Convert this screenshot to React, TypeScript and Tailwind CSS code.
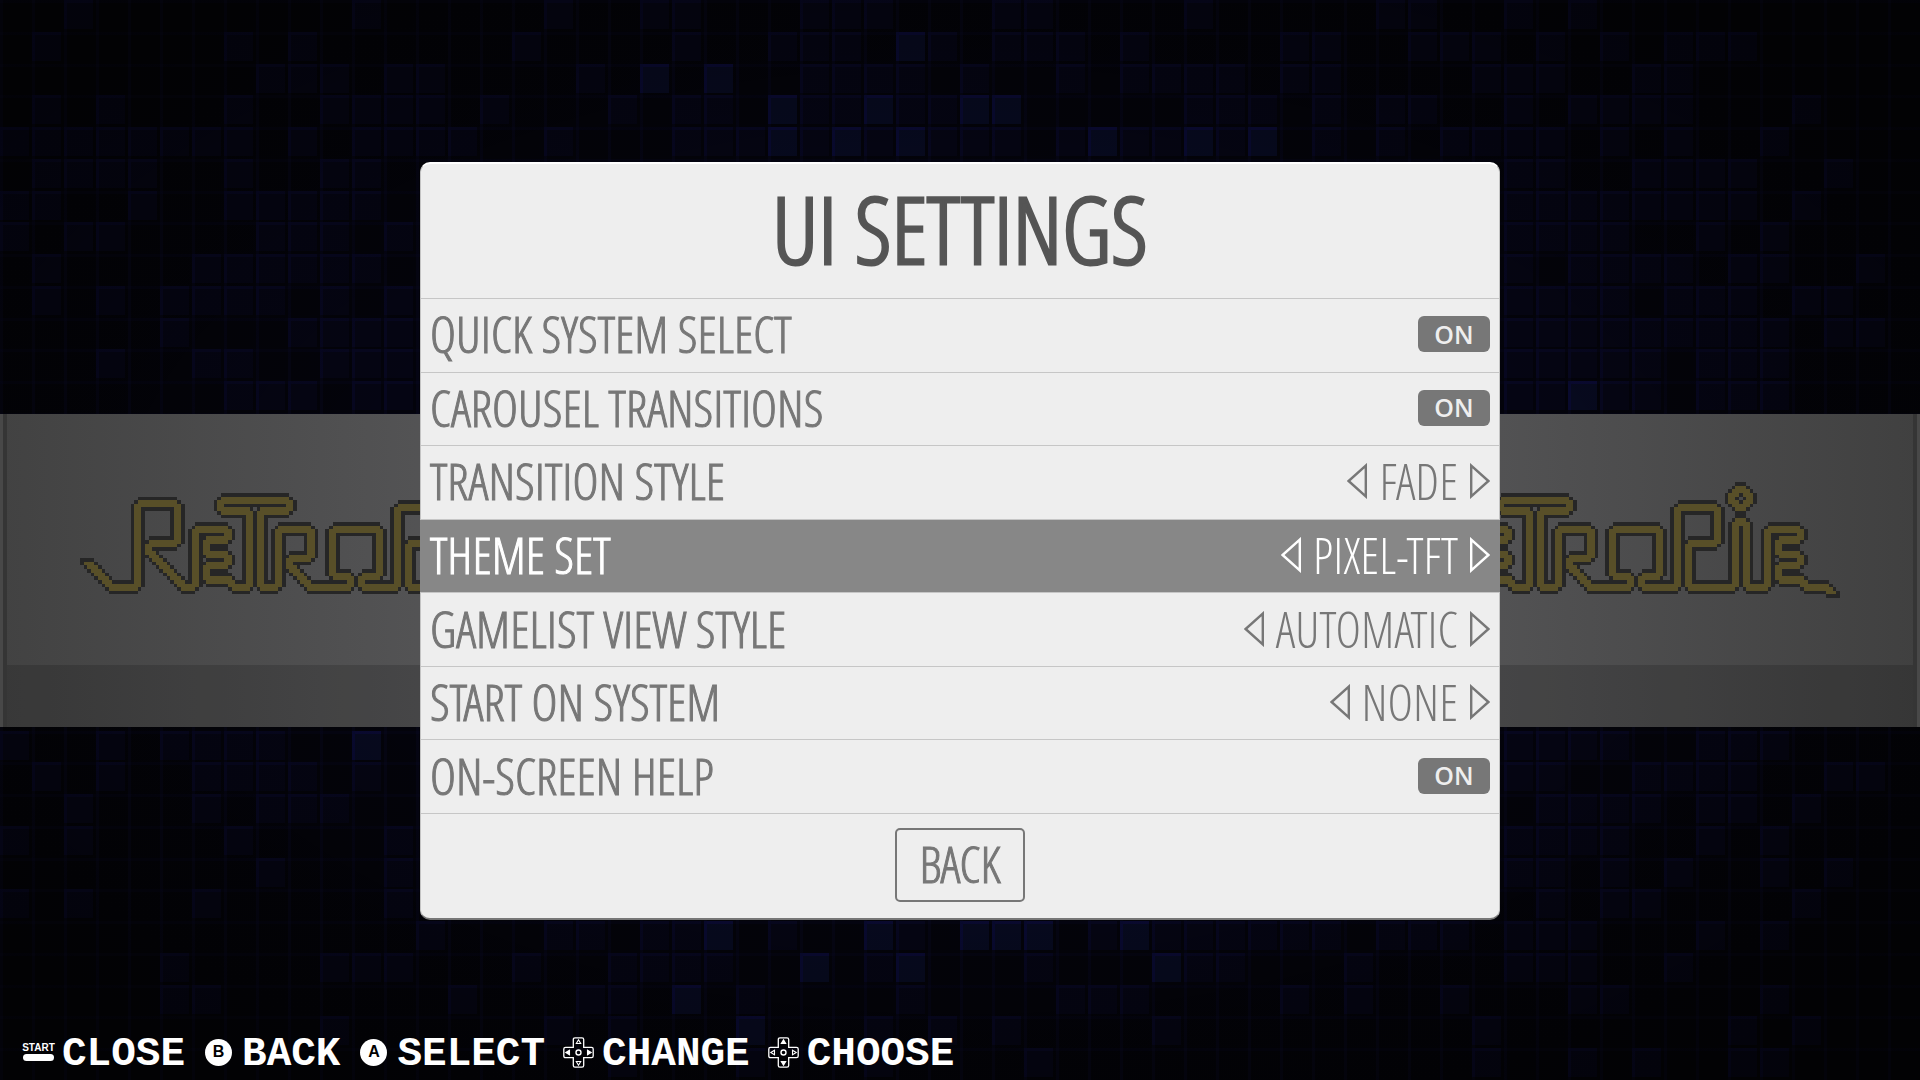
import { useState } from "react";

/* ---------- Backdrop: dark mosaic of 60 x 34 tiles ---------- */

const COLS = 60;
const ROWS = 34;
const TILE_W = 32;
const TILE_H = 1080 / ROWS;

// Lit tiles, one list of columns per row.
const LIT: number[][] = [
  [2, 11, 17, 20, 21, 25, 26, 27, 31, 32, 37, 43, 44, 47, 49],
  [1, 7, 9, 16, 21, 24, 25, 26, 28, 29, 31, 32, 33, 35, 40, 41, 44, 45, 46, 48, 50, 52, 53, 54],
  [8, 9, 10, 12, 13, 18, 20, 22, 25, 26, 27, 28, 30, 33, 35, 36, 37, 38, 40, 41, 46, 47, 48, 51, 52],
  [1, 3, 7, 10, 11, 12, 13, 15, 19, 21, 22, 24, 25, 26, 27, 28, 29, 30, 31, 37, 38, 39, 41, 43, 44, 47, 49, 50, 51, 52, 56],
  [0, 1, 2, 3, 4, 5, 6, 7, 9, 11, 12, 13, 14, 17, 21, 22, 23, 24, 25, 26, 27, 28, 29, 30, 31, 33, 34, 35, 36, 37, 38, 39, 41, 43, 45, 46, 47, 48, 50, 52, 55],
  [1, 2, 3, 4, 7, 10, 11, 47, 48, 51, 52, 53, 54, 57],
  [0, 1, 4, 7, 8, 9, 10, 11, 47, 48, 49, 50, 51, 52, 53, 54, 56],
  [0, 2, 3, 8, 9, 10, 12, 47, 48, 49, 50, 53, 55],
  [1, 6, 7, 8, 9, 10, 11, 47, 49, 50, 51, 52, 54, 55, 58],
  [1, 3, 5, 6, 7, 8, 10, 12, 47, 48, 49, 50, 52, 53, 54, 56, 57],
  [5, 9, 10, 11, 12, 47, 48, 49, 50, 51, 52, 53, 54, 55, 57, 58],
  [3, 6, 7, 10, 11, 12, 47, 48, 49, 50, 51, 53, 54, 55],
  [7, 8, 9, 11, 12, 47, 48, 49, 50, 51, 53, 54, 55],
  [], [], [], [], [], [], [], [], [], [],
  [0, 3, 5, 6, 7, 8, 11, 47, 48, 49, 50, 53, 54, 55],
  [1, 3, 6, 7, 8, 9, 11, 47, 48, 51, 52, 53, 54, 57, 58],
  [2, 6, 8, 9, 10, 48, 49, 50, 51, 53, 54, 56],
  [0, 2, 7, 12, 47, 48, 49, 50, 53, 55],
  [8, 12, 47, 48, 50, 52, 55, 57],
  [0, 2, 6, 12, 48, 50, 51, 56],
  [13, 17, 18, 20, 21, 22, 24, 27, 28, 30, 31, 32, 34, 35, 36, 37, 38, 39, 40, 41, 43, 44, 45, 47, 48, 49, 53, 55],
  [5, 10, 11, 12, 16, 19, 20, 21, 22, 25, 27, 28, 32, 36, 37, 38, 42, 47, 48, 49, 52],
  [5, 6, 14, 18, 19, 21, 23, 28, 33, 34, 35, 40, 42, 45, 49, 50, 55],
  [10, 17, 19, 23, 27, 29, 31, 36, 46, 54, 56],
  [19, 23, 27, 32, 46, 49, 51, 54, 55],
];

// Tiles that glow stronger than the other lit ones.
const BRIGHT = new Set([
  "28,1", "20,2", "22,2", "24,3", "27,3", "30,3", "31,3", "24,4", "26,4", "28,4", "34,4", "37,4", "39,4",
  "49,12", "11,23", "22,29", "27,29", "30,29", "31,29", "32,29", "35,29",
  "25,30", "28,30", "36,30", "21,31", "23,32",
]);

function Backdrop() {
  const lit = LIT.flatMap((cols, row) => cols.map((col) => ({ col, row })));
  return (
    <svg className="h-full w-full" viewBox="0 0 1920 1080" preserveAspectRatio="none" aria-hidden="true">
      <defs>
        <radialGradient id="shade" cx="50%" cy="50%" r="62%">
          <stop offset="0" stopColor="#04040f" />
          <stop offset="0.5" stopColor="#03030b" />
          <stop offset="1" stopColor="#030306" />
        </radialGradient>
        <radialGradient id="vignette" cx="50%" cy="50%" r="62%">
          <stop offset="0.5" stopColor="#000" stopOpacity="0" />
          <stop offset="1" stopColor="#000" stopOpacity="0.4" />
        </radialGradient>
      </defs>
      <rect width="1920" height="1080" fill="url(#shade)" />
      <g shapeRendering="crispEdges">
        {lit.map(({ col, row }) => {
          const strong = BRIGHT.has(`${col},${row}`);
          const x = col * TILE_W;
          const y = row * TILE_H;
          return (
            <g key={`${col},${row}`}>
              <rect x={x} y={y} width={29} height={29} fill={strong ? "#0a0b33" : "#07071c"} />
              <rect x={x + 3} y={y + 3} width={26} height={26} fill={strong ? "#070a1f" : "#050513"} />
            </g>
          );
        })}
        {Array.from({ length: COLS }, (_, i) => (
          <rect key={`c${i}`} x={i * TILE_W} y={0} width={3} height={1080} fill="#0a0a2c" opacity={0.3} />
        ))}
        {Array.from({ length: ROWS }, (_, i) => (
          <rect key={`r${i}`} x={0} y={i * TILE_H} width={1920} height={3} fill="#0a0a2c" opacity={0.2} />
        ))}
      </g>
      <rect width="1920" height="1080" fill="url(#vignette)" />
    </svg>
  );
}

/* ---------- RetroPie logo, drawn on a 133 x 32 pixel grid ---------- */

const LOGO_W = 133;
const LOGO_H = 32;

// Centre line of the tube, walked with a 2 x 2 brush.
const TUBE: [number, number][] = [
  [2, 22], [8, 28], [15, 28], [15, 5], [26, 5], [26, 16], [18, 16], [18, 18], [28, 28], [31, 28],
  [31, 12], [40, 12], [40, 15], [34, 15], [34, 19], [40, 19], [40, 22], [34, 22], [34, 26], [40, 26], [42, 28],
  [46, 28], [46, 7], [38, 7], [38, 4], [57, 4], [57, 7], [49, 7], [49, 28],
  [54, 28], [54, 12], [63, 12], [63, 20], [57, 20], [57, 22], [63, 28],
  [74, 28], [74, 25], [69, 25], [69, 12], [82, 12], [82, 25], [77, 25], [77, 28],
  [87, 28], [87, 6], [98, 6], [98, 16], [90, 16], [90, 28],
  [103, 28], [103, 10], [106, 10], [106, 28],
  [112, 28], [112, 12], [121, 12], [121, 15], [115, 15], [115, 19], [121, 19], [121, 22], [115, 22], [115, 26],
  [121, 26], [123, 28], [128, 28], [129, 29],
];

// The dot over the "i": row, first column, last column.
const DOT: [number, number, number][] = [
  [1, 104, 106], [2, 103, 107], [3, 102, 108], [4, 102, 108], [5, 102, 108], [6, 103, 107], [7, 104, 106],
];

function buildLogo() {
  const gold = new Set<number>();
  const at = (x: number, y: number) => y * LOGO_W + x;
  const stamp = (x: number, y: number) => {
    gold.add(at(x, y));
    gold.add(at(x + 1, y));
    gold.add(at(x, y + 1));
    gold.add(at(x + 1, y + 1));
  };
  for (let i = 1; i < TUBE.length; i++) {
    let [x, y] = TUBE[i - 1];
    const [tx, ty] = TUBE[i];
    stamp(x, y);
    while (x !== tx || y !== ty) {
      x += Math.sign(tx - x);
      y += Math.sign(ty - y);
      stamp(x, y);
    }
  }
  // Round every right-angled bend by dropping its outer cell.
  for (let i = 1; i < TUBE.length - 1; i++) {
    const [px, py] = TUBE[i - 1];
    const [x, y] = TUBE[i];
    const [nx, ny] = TUBE[i + 1];
    const a = [Math.sign(x - px), Math.sign(y - py)];
    const b = [Math.sign(nx - x), Math.sign(ny - y)];
    if (a[0] * b[0] + a[1] * b[1] !== 0) continue;
    if ((a[0] && a[1]) || (b[0] && b[1])) continue;
    const sx = a[0] || -b[0];
    const sy = a[1] || -b[1];
    gold.delete(at(x + (sx > 0 ? 1 : 0), y + (sy > 0 ? 1 : 0)));
  }
  gold.add(at(1, 22));
  gold.add(at(131, 30));
  for (const [y, x0, x1] of DOT) for (let x = x0; x <= x1; x++) gold.add(at(x, y));
  [at(105, 3), at(104, 4), at(105, 4), at(106, 4), at(105, 5)].forEach((c) => gold.delete(c));

  const dark = new Set<number>([at(0, 21), at(132, 31), at(104, 8), at(105, 8), at(106, 8)]);
  gold.forEach((c) => {
    [c - 1, c + 1, c - LOGO_W, c + LOGO_W].forEach((n) => {
      if (!gold.has(n)) dark.add(n);
    });
  });
  const toPath = (cells: Set<number>) =>
    [...cells].map((c) => `M${c % LOGO_W} ${Math.floor(c / LOGO_W)}h1v1h-1z`).join("");
  return { gold: toPath(gold), dark: toPath(dark) };
}

const LOGO = buildLogo();

function RetroPieLogo() {
  return (
    <svg
      className="h-[116px] w-3/4"
      viewBox={`0 0 ${LOGO_W} ${LOGO_H}`}
      preserveAspectRatio="none"
      shapeRendering="crispEdges"
      role="img"
      aria-label="RetroPie"
    >
      <path d={LOGO.dark} fill="#262626" />
      <path d={LOGO.gold} fill="#584f28" />
    </svg>
  );
}

function SystemBand() {
  return (
    <div className="mt-[414px] flex h-[313px] flex-col bg-linear-to-r from-[#424242] via-[#6a6a6d] to-[#404040]">
      <div className="flex flex-1 border-x-3 border-[#484848]">
        <div className="flex flex-1 flex-col border-x-4 border-[#353535]">
          <div className="-mx-[7px] flex h-[251px] items-start pt-[68px]">
            {[0, 1, 2].map((i) => (
              <div key={i} className="flex flex-1 justify-center">
                <RetroPieLogo />
              </div>
            ))}
          </div>
          <div className="flex-1 bg-black/15" />
        </div>
      </div>
    </div>
  );
}

/* ---------- Settings panel ---------- */

function Arrow({ flip = false }: { flip?: boolean }) {
  return (
    <svg className="h-9 w-5" viewBox="0 0 20 36" fill="none" stroke="currentColor" strokeWidth="2.4" aria-hidden="true">
      {flip ? <path d="M1.2 2.6v30.8L18.4 18z" /> : <path d="M18.8 2.6v30.8L1.6 18z" />}
    </svg>
  );
}

function RowLabel({ children }: { children: string }) {
  return <span className="text-[50px] leading-[68px] [-webkit-text-stroke:1px_currentColor]">{children}</span>;
}

function ToggleRow({ label }: { label: string }) {
  const [on, setOn] = useState(true);
  return (
    <label className="flex cursor-pointer items-center justify-between border-t border-[#c6c6c6] px-[9px] pb-[2px] text-[#777777]">
      <RowLabel>{label}</RowLabel>
      <input type="checkbox" className="peer sr-only" checked={on} onChange={() => setOn(!on)} />
      <span className="flex h-9 w-[72px] items-center justify-center rounded-md bg-[#777777] font-['Open_Sans',sans-serif] text-[25px] leading-none font-semibold text-[#eeeeee]">
        {on ? "ON" : "OFF"}
      </span>
    </label>
  );
}

function ChoiceRow({ label, value, active = false }: { label: string; value: string; active?: boolean }) {
  return (
    <div
      role="group"
      aria-label={label}
      className={
        active
          ? "-mx-px flex items-center justify-between border-t border-[#c6c6c6] bg-[#878787] px-[10px] pb-[2px] text-white"
          : "flex items-center justify-between border-t border-[#c6c6c6] px-[9px] pb-[2px] text-[#777777]"
      }
    >
      <RowLabel>{label}</RowLabel>
      <span className="flex items-center gap-3">
        <button type="button" aria-label={`Previous ${label}`}>
          <Arrow />
        </button>
        <span className="text-[49px] leading-[68px]">{value}</span>
        <button type="button" aria-label={`Next ${label}`}>
          <Arrow flip />
        </button>
      </span>
    </div>
  );
}

function SettingsPanel() {
  return (
    <section className="flex w-[56.25%] flex-col rounded-[10px] border border-t-2 border-b-2 border-[#c4c4c4] border-t-white border-b-[#777777] bg-[#eeeeee] font-['Open_Sans_Condensed_Light','Open_Sans_Condensed','Open_Sans',sans-serif]">
      <h1 className="pb-[6px] text-center text-[93px] leading-[128px] text-[#555555] [-webkit-text-stroke:3px_currentColor]">
        UI SETTINGS
      </h1>
      <div className="grid min-h-[515px] auto-rows-fr">
        <ToggleRow label="QUICK SYSTEM SELECT" />
        <ToggleRow label="CAROUSEL TRANSITIONS" />
        <ChoiceRow label="TRANSITION STYLE" value="FADE" />
        <ChoiceRow label="THEME SET" value="PIXEL-TFT" active />
        <ChoiceRow label="GAMELIST VIEW STYLE" value="AUTOMATIC" />
        <ChoiceRow label="START ON SYSTEM" value="NONE" />
        <ToggleRow label="ON-SCREEN HELP" />
      </div>
      <div className="flex justify-center border-t border-[#c6c6c6] pt-[14px] pb-4">
        <button
          type="button"
          className="rounded-[5px] border-2 border-[#777777] px-[22px] pb-[2px] text-[50px] leading-[68px] text-[#777777] [-webkit-text-stroke:1px_currentColor]"
        >
          BACK
        </button>
      </div>
    </section>
  );
}

/* ---------- Help bar ---------- */

function StartIcon() {
  return (
    <span className="flex flex-col items-center gap-[3px] font-['Liberation_Sans',sans-serif]">
      <span className="text-[10px] leading-[7px] font-bold">START</span>
      <span className="h-[7px] w-[31px] rounded-full bg-white" />
    </span>
  );
}

function RoundIcon({ letter }: { letter: string }) {
  return (
    <span className="flex h-[27px] w-[27px] items-center justify-center rounded-full bg-white font-['Liberation_Sans',sans-serif] text-base leading-none font-bold text-black">
      {letter}
    </span>
  );
}

function PadIcon({ axis }: { axis: "x" | "y" }) {
  const h = axis === "x" ? "#fff" : "none";
  const v = axis === "y" ? "#fff" : "none";
  return (
    <svg className="h-[31px] w-[31px]" viewBox="0 0 31 31" fill="none" stroke="#fff" aria-hidden="true">
      <path
        d="M12 0.8h7q1.7 0 1.7 1.7v7.8h7.8q1.7 0 1.7 1.7v7q0 1.7-1.7 1.7h-7.8v7.8q0 1.7-1.7 1.7h-7q-1.7 0-1.7-1.7v-7.8H2.5q-1.7 0-1.7-1.7v-7q0-1.7 1.7-1.7h7.8V2.5q0-1.7 1.7-1.7z"
        strokeWidth="1.3"
      />
      <circle cx="15.5" cy="15.5" r="2.5" strokeWidth="1.4" />
      <path d="M15.5 2.8l2.2 3.7h-4.4z" fill={v} strokeWidth="1.1" />
      <path d="M15.5 28.2l2.2-3.7h-4.4z" fill={v} strokeWidth="1.1" />
      <path d="M2.8 15.5l3.7-2.2v4.4z" fill={h} strokeWidth="1.1" />
      <path d="M28.2 15.5l-3.7-2.2v4.4z" fill={h} strokeWidth="1.1" />
    </svg>
  );
}

const HELP = [
  { text: "CLOSE", icon: <StartIcon /> },
  { text: "BACK", icon: <RoundIcon letter="B" /> },
  { text: "SELECT", icon: <RoundIcon letter="A" /> },
  { text: "CHANGE", icon: <PadIcon axis="x" /> },
  { text: "CHOOSE", icon: <PadIcon axis="y" /> },
];

function HelpBar() {
  return (
    <footer className="flex items-center gap-[18px] px-[23px] pb-[6px] text-white">
      {HELP.map(({ text, icon }) => (
        <button key={text} type="button" className="flex items-center gap-2">
          <span className="flex w-[31px] justify-center">{icon}</span>
          <span className="pt-1 font-['Liberation_Mono',monospace] text-[41px] leading-10 font-bold">{text}</span>
        </button>
      ))}
    </footer>
  );
}

export default function App() {
  return (
    <div className="grid min-h-screen grid-cols-1 overflow-hidden bg-black *:col-start-1 *:row-start-1">
      <div className="grid">
        <Backdrop />
      </div>
      <SystemBand />
      <div className="z-10 flex flex-col justify-between">
        <main className="flex justify-center pt-[162px]">
          <SettingsPanel />
        </main>
        <HelpBar />
      </div>
    </div>
  );
}
